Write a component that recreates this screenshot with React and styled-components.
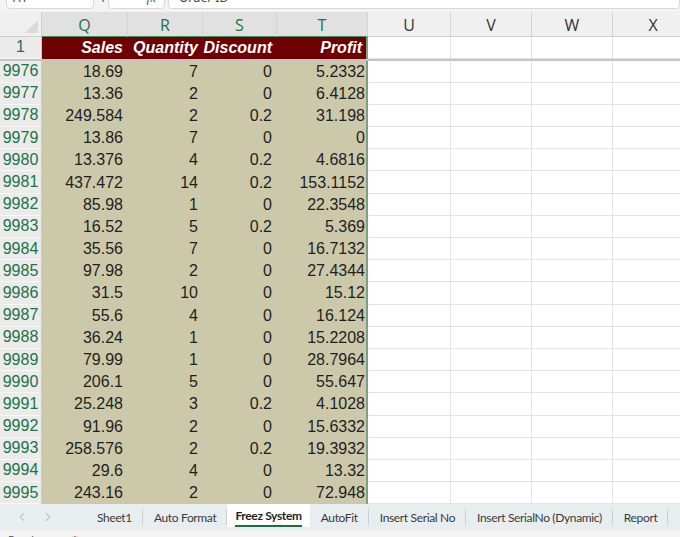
import React from "react";
import styled, { createGlobalStyle } from "styled-components";
import { ChevronDown, ChevronLeft, ChevronRight, X, Check } from "lucide-react";

const GlobalStyle = createGlobalStyle`
  html, body {
    margin: 0;
    padding: 0;
    background: #ffffff;
    overflow: hidden;
  }
  * { box-sizing: border-box; }
`;

const COLS = "42px 86px 75px 74px 91px 83px 81px 81px 81px";

const Window = styled.div`
  width: 680px;
  height: 537px;
  display: flex;
  flex-direction: column;
  overflow: hidden;
  font-family: "Liberation Sans", Arial, sans-serif;
`;

const FormulaBar = styled.div`
  height: 26px;
  margin-top: -14px;
  background: #f3f3f3;
  display: flex;
  align-items: flex-start;
  gap: 3px;
  padding-left: 6px;
  flex-shrink: 0;
`;

const BarBox = styled.div`
  height: 23px;
  background: #ffffff;
  border: 1px solid #d9d9d9;
  border-radius: 4px;
  display: flex;
  align-items: center;
  font-family: "Noto Sans", sans-serif;
  font-size: 12px;
  color: #444;
  width: ${(p) => p.$w || "auto"};
  flex: ${(p) => (p.$grow ? 1 : "none")};
  padding: 0 8px 0 6px;
  justify-content: ${(p) => (p.$between ? "space-between" : "flex-start")};
  gap: 8px;
`;

const Dots = styled.span`
  font-size: 12px;
  color: #666;
  width: 8px;
  text-align: center;
  line-height: 20px;
`;

const Fx = styled.span`
  font-family: "Liberation Serif", serif;
  font-style: italic;
  font-size: 13px;
  color: #555;
`;

const Sheet = styled.div`
  flex: 1;
  min-height: 0;
  overflow: hidden;
  background: #ffffff;
`;

const Row = styled.div`
  display: grid;
  grid-template-columns: ${COLS};
  height: ${(p) => p.$h}px;
`;

const Corner = styled.div`
  background: #f0f0f0;
  border-right: 1px solid #cfcfcf;
  border-bottom: 1px solid #cfcfcf;
  position: relative;
  &::after {
    content: "";
    position: absolute;
    right: 3px;
    bottom: 3px;
    border-left: 13px solid transparent;
    border-bottom: 13px solid #dadada;
  }
`;

const ColHead = styled.div`
  display: flex;
  align-items: center;
  justify-content: center;
  padding-top: 2px;
  font-family: "Open Sans", "Noto Sans", sans-serif;
  font-size: 16px;
  color: ${(p) => (p.$sel ? "#217346" : "#333")};
  background: ${(p) => (p.$sel ? "#e1e1e1" : "#f0f0f0")};
  border-right: 1px solid #d4d4d4;
  border-bottom: ${(p) => (p.$sel ? "1px solid #3f8f5f" : "1px solid #cfcfcf")};
`;

const RowHead = styled.div`
  display: flex;
  align-items: center;
  justify-content: center;
  font-size: 16px;
  color: #217346;
  background: #ebebeb;
  border-right: 1px solid #cbcbcb;
  border-bottom: 1px solid #f7f7f7;
`;

const TitleCell = styled.div`
  background: #6e0000;
  color: #ffffff;
  font-weight: 700;
  font-style: italic;
  font-size: 16px;
  display: flex;
  align-items: center;
  justify-content: flex-end;
  padding-right: ${(p) => (p.$last ? "4px" : "5px")};
  border-right: ${(p) => (p.$last ? "2px solid #7aa086" : "none")};
`;

const DataCell = styled.div`
  background: #ccc9ab;
  color: #1e1e1e;
  font-size: 16px;
  display: flex;
  align-items: center;
  justify-content: flex-end;
  padding-right: ${(p) => (p.$last ? "1px" : "5px")};
  border-right: ${(p) => (p.$last ? "2px solid #7aa086" : "none")};
`;

const Blank = styled.div`
  border-right: 1px solid #e3e3e3;
  border-bottom: 1px solid #e3e3e3;
`;

const FreezeLine = styled.div`
  height: 2px;
  background: #c4c4c4;
`;

const TabBar = styled.div`
  height: 26px;
  flex-shrink: 0;
  background: #e8eef0;
  display: flex;
  align-items: stretch;
  overflow: hidden;
  font-family: Lato, "Noto Sans", sans-serif;
  font-size: 12px;
  letter-spacing: -0.35px;
  color: #3a3a3a;
`;

const Nav = styled.div`
  width: 86px;
  flex-shrink: 0;
  display: flex;
  align-items: center;
  padding-left: 15px;
  gap: 12px;
  color: #9a9a9a;
`;

const Tab = styled.div`
  display: flex;
  align-items: center;
  flex-shrink: 0;
  padding: 0 ${(p) => (p.$active ? "8px" : "11px")};
  position: relative;
  white-space: nowrap;
  background: ${(p) => (p.$active ? "#ffffff" : "transparent")};
  font-weight: ${(p) => (p.$active ? 700 : 400)};
  color: ${(p) => (p.$active ? "#1f1f1f" : "#3a3a3a")};
  margin-bottom: ${(p) => (p.$active ? "3px" : "0")};
  &::after {
    content: "";
    position: absolute;
    right: 0;
    top: 5px;
    bottom: 5px;
    width: 1px;
    background: ${(p) => (p.$divider ? "#c9d0d3" : "transparent")};
  }
`;

const TabLabel = styled.span`
  position: relative;
  &::after {
    content: "";
    display: ${(p) => (p.$active ? "block" : "none")};
    position: absolute;
    left: 0;
    right: 0;
    bottom: -4px;
    height: 2px;
    background: #1e6b43;
  }
`;

const StatusBar = styled.div`
  height: 7px;
  flex-shrink: 0;
  overflow: hidden;
  background: #f3f3f3;
  display: flex;
  align-items: flex-start;
  padding: 3px 0 0 8px;
  gap: 30px;
  font-family: "Noto Sans", sans-serif;
  font-size: 11px;
  color: #555;
  line-height: 14px;
`;

const letters = ["Q", "R", "S", "T", "U", "V", "W", "X"];
const titles = ["Sales", "Quantity", "Discount", "Profit"];

const data = [
  [9976, "18.69", "7", "0", "5.2332"],
  [9977, "13.36", "2", "0", "6.4128"],
  [9978, "249.584", "2", "0.2", "31.198"],
  [9979, "13.86", "7", "0", "0"],
  [9980, "13.376", "4", "0.2", "4.6816"],
  [9981, "437.472", "14", "0.2", "153.1152"],
  [9982, "85.98", "1", "0", "22.3548"],
  [9983, "16.52", "5", "0.2", "5.369"],
  [9984, "35.56", "7", "0", "16.7132"],
  [9985, "97.98", "2", "0", "27.4344"],
  [9986, "31.5", "10", "0", "15.12"],
  [9987, "55.6", "4", "0", "16.124"],
  [9988, "36.24", "1", "0", "15.2208"],
  [9989, "79.99", "1", "0", "28.7964"],
  [9990, "206.1", "5", "0", "55.647"],
  [9991, "25.248", "3", "0.2", "4.1028"],
  [9992, "91.96", "2", "0", "15.6332"],
  [9993, "258.576", "2", "0.2", "19.3932"],
  [9994, "29.6", "4", "0", "13.32"],
  [9995, "243.16", "2", "0", "72.948"],
];

const sheets = [
  "Sheet1",
  "Auto Format",
  "Freez System",
  "AutoFit",
  "Insert Serial No",
  "Insert SerialNo (Dynamic)",
  "Report",
];
const activeSheet = "Freez System";

const Blanks = () => (
  <>
    <Blank />
    <Blank />
    <Blank />
    <Blank />
  </>
);

export default function App() {
  return (
    <Window>
      <GlobalStyle />
      <FormulaBar>
        <BarBox $w="88px" $between>
          <span>A1</span>
          <ChevronDown size={13} color="#666" />
        </BarBox>
        <Dots>⋮</Dots>
        <BarBox $w="57px">
          <X size={12} color="#aaa" strokeWidth={1.5} />
          <Check size={12} color="#aaa" strokeWidth={1.5} />
          <Fx>fx</Fx>
        </BarBox>
        <BarBox $grow>
          <span style={{ paddingLeft: 4 }}>Order ID</span>
        </BarBox>
      </FormulaBar>

      <Sheet>
        <Row $h={25}>
          <Corner />
          {letters.map((l, i) => (
            <ColHead key={l} $sel={i < 4}>
              {l}
            </ColHead>
          ))}
        </Row>
        <Row $h={21.5}>
          <RowHead>1</RowHead>
          {titles.map((t, i) => (
            <TitleCell key={t} $last={i === 3}>
              {t}
            </TitleCell>
          ))}
          <Blanks />
        </Row>
        <FreezeLine />
        {data.map(([n, ...vals]) => (
          <Row key={n} $h={22.2}>
            <RowHead>{n}</RowHead>
            {vals.map((v, i) => (
              <DataCell key={i} $last={i === 3}>
                {v}
              </DataCell>
            ))}
            <Blanks />
          </Row>
        ))}
      </Sheet>

      <TabBar>
        <Nav>
          <ChevronLeft size={14} strokeWidth={1.5} />
          <ChevronRight size={14} strokeWidth={1.5} />
        </Nav>
        {sheets.map((s, i) => {
          const active = s === activeSheet;
          const nextActive = sheets[i + 1] === activeSheet;
          return (
            <Tab
              key={s}
              $active={active}
              $divider={(!active && !nextActive) || s === "Auto Format"}
            >
              <TabLabel $active={active}>{s}</TabLabel>
            </Tab>
          );
        })}
      </TabBar>
      <StatusBar>
        <span>Ready</span>
        <span>⚙</span>
      </StatusBar>
    </Window>
  );
}
